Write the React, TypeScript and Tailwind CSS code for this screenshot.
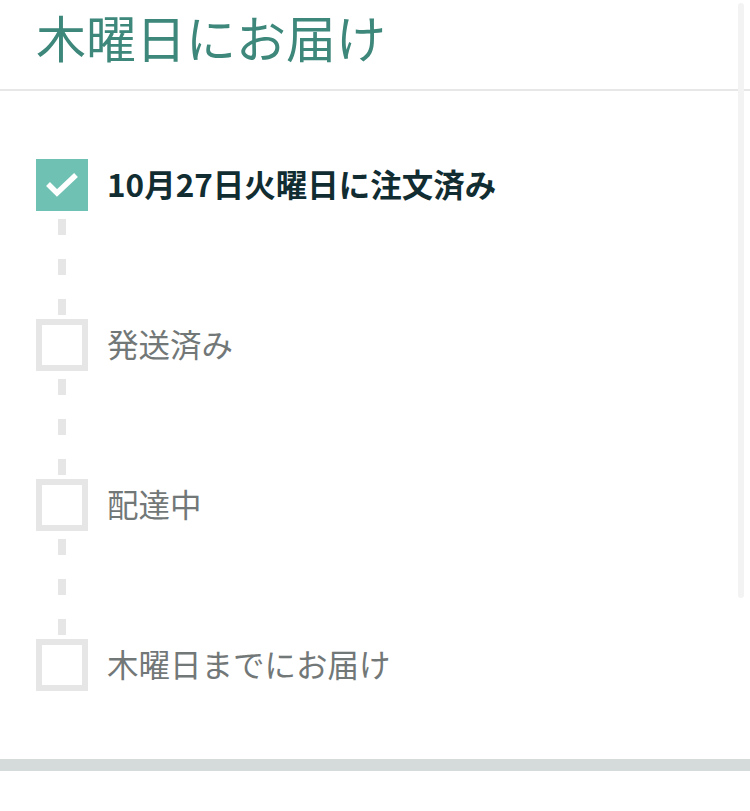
import React from "react";

type Step = {
  label: string;
  done: boolean;
};

const steps: Step[] = [
  { label: "10月27日火曜日に注文済み", done: true },
  { label: "発送済み", done: false },
  { label: "配達中", done: false },
  { label: "木曜日までにお届け", done: false },
];

function StepBox({ done }: { done: boolean }) {
  if (done) {
    return (
      <div className="w-[52px] h-[52px] shrink-0 bg-[#6fc1b3]">
        <svg width="52" height="52" viewBox="0 0 52 52">
          <polyline
            points="12,25 21,34 40,16"
            fill="none"
            stroke="#ffffff"
            strokeWidth="5.5"
            strokeLinejoin="miter"
          />
        </svg>
      </div>
    );
  }
  return <div className="w-[52px] h-[52px] shrink-0 border-[6px] border-[#e6e6e6] bg-white" />;
}

// dashed line between two steps
function Connector() {
  return (
    <div className="w-[52px] h-[108px] flex flex-col items-center pt-2 gap-6">
      <div className="w-2 h-4 bg-[#e6e6e6]" />
      <div className="w-2 h-4 bg-[#e6e6e6]" />
      <div className="w-2 h-4 bg-[#e6e6e6]" />
    </div>
  );
}

export default function App() {
  return (
    <div
      className="relative w-[750px] h-[811px] bg-white overflow-hidden"
      style={{ fontFamily: '"Noto Sans CJK JP", "Noto Sans", sans-serif' }}
    >
      <div className="h-[89px] pl-9 flex items-start">
        <h1 className="text-[50px] leading-[72px] text-[#3d877b] font-normal">木曜日にお届け</h1>
      </div>
      <div className="h-[2px] bg-[#e7e7e7]" />

      <div className="pl-9 pt-[68px] pb-[68px]">
        {steps.map((step, i) => (
          <div key={i}>
            <div className="flex items-center h-[52px]">
              <StepBox done={step.done} />
              <span
                className={
                  step.done
                    ? "ml-[19px] -mt-[3px] text-[31.5px] leading-none font-bold text-[#112d32]"
                    : "ml-[19px] -mt-[3px] text-[31.5px] leading-none text-[#727777]"
                }
              >
                {step.label}
              </span>
            </div>
            {i < steps.length - 1 && <Connector />}
          </div>
        ))}
      </div>

      <div className="h-3 bg-[#d5dada]" />

      {/* scroll indicator */}
      <div className="absolute right-[6px] top-[3px] w-[6px] h-[595px] rounded-full bg-[#f3f3f3]" />
    </div>
  );
}
